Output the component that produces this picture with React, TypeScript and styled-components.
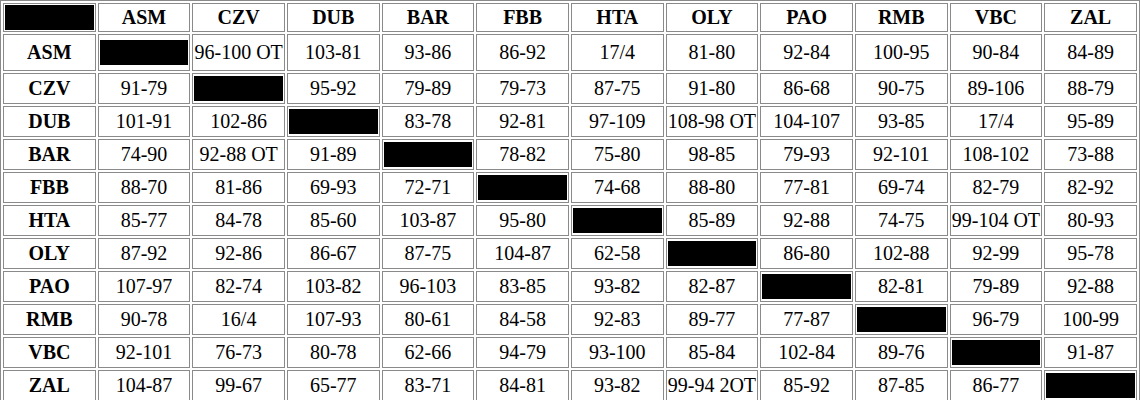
import React from 'react';
import styled, { createGlobalStyle } from 'styled-components';

const teams = ['ASM', 'CZV', 'DUB', 'BAR', 'FBB', 'HTA', 'OLY', 'PAO', 'RMB', 'VBC', 'ZAL'];

const results: string[][] = [
  ['', '96-100 OT', '103-81', '93-86', '86-92', '17/4', '81-80', '92-84', '100-95', '90-84', '84-89'],
  ['91-79', '', '95-92', '79-89', '79-73', '87-75', '91-80', '86-68', '90-75', '89-106', '88-79'],
  ['101-91', '102-86', '', '83-78', '92-81', '97-109', '108-98 OT', '104-107', '93-85', '17/4', '95-89'],
  ['74-90', '92-88 OT', '91-89', '', '78-82', '75-80', '98-85', '79-93', '92-101', '108-102', '73-88'],
  ['88-70', '81-86', '69-93', '72-71', '', '74-68', '88-80', '77-81', '69-74', '82-79', '82-92'],
  ['85-77', '84-78', '85-60', '103-87', '95-80', '', '85-89', '92-88', '74-75', '99-104 OT', '80-93'],
  ['87-92', '92-86', '86-67', '87-75', '104-87', '62-58', '', '86-80', '102-88', '92-99', '95-78'],
  ['107-97', '82-74', '103-82', '96-103', '83-85', '93-82', '82-87', '', '82-81', '79-89', '92-88'],
  ['90-78', '16/4', '107-93', '80-61', '84-58', '92-83', '89-77', '77-87', '', '96-79', '100-99'],
  ['92-101', '76-73', '80-78', '62-66', '94-79', '93-100', '85-84', '102-84', '89-76', '', '91-87'],
  ['104-87', '99-67', '65-77', '83-71', '84-81', '93-82', '99-94 2OT', '85-92', '87-85', '86-77', ''],
];

const GlobalStyle = createGlobalStyle`
  html, body {
    margin: 0;
    padding: 0;
    background: #fff;
  }
  body {
    font-family: "Liberation Serif", "Times New Roman", serif;
    color: #000;
  }
`;

const Table = styled.table`
  width: 100%;
  table-layout: fixed;
  border: 1px solid #8a8a8a;
  border-spacing: 2px;
  border-collapse: separate;
  font-size: 20px;
`;

const Row = styled.tr<{ $height: number }>`
  height: ${({ $height }) => $height}px;
`;

const Head = styled.th`
  border: 1px solid #8a8a8a;
  padding: 2px 0;
  font-weight: bold;
  text-align: center;
  white-space: nowrap;
  overflow: hidden;
`;

const Cell = styled.td`
  border: 1px solid #8a8a8a;
  padding: 2px 0;
  text-align: center;
  white-space: nowrap;
  overflow: hidden;
`;

const BlankCell = styled.td<{ $corner?: boolean }>`
  border: 1px solid #8a8a8a;
  padding: ${({ $corner }) => ($corner ? '1px' : '0 1px')};
`;

const Block = styled.div`
  background: #000;
  height: 25px;
`;

export default function App() {
  return (
    <>
      <GlobalStyle />
      <Table>
        <tbody>
          <Row $height={29}>
            <BlankCell $corner>
              <Block />
            </BlankCell>
            {teams.map((t) => (
              <Head key={t}>{t}</Head>
            ))}
          </Row>
          {teams.map((home, i) => (
            <Row key={home} $height={i === 0 ? 37 : 31}>
              <Head>{home}</Head>
              {results[i].map((score, j) =>
                j === i ? (
                  <BlankCell key={j}>
                    <Block />
                  </BlankCell>
                ) : (
                  <Cell key={j}>{score}</Cell>
                )
              )}
            </Row>
          ))}
        </tbody>
      </Table>
    </>
  );
}
